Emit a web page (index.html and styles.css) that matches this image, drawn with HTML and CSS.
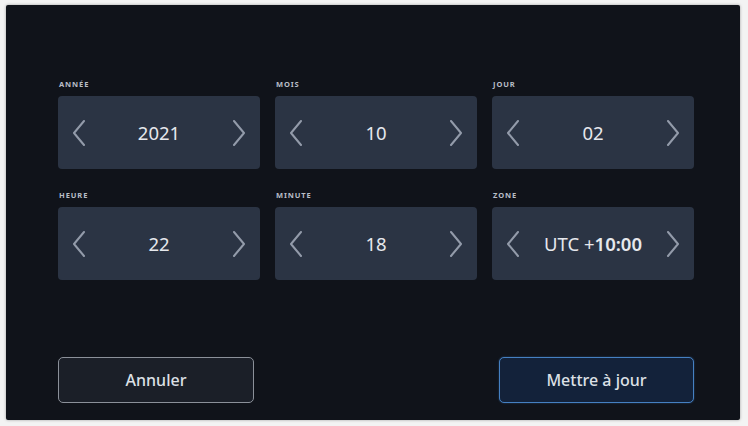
FILE: index.html
```html
<!DOCTYPE html>
<html lang="fr">
<head>
<meta charset="utf-8">
<title>Date et heure</title>
<link rel="stylesheet" href="styles.css">
</head>
<body>
<div class="panel">
  <div class="grid">
    <div class="field">
      <div class="label">ANNÉE</div>
      <div class="card">
        <svg class="chev" viewBox="0 0 14 26"><polyline points="12,1 2,13 12,25"/></svg>
        <span class="value">2021</span>
        <svg class="chev" viewBox="0 0 14 26"><polyline points="2,1 12,13 2,25"/></svg>
      </div>
    </div>
    <div class="field">
      <div class="label">MOIS</div>
      <div class="card">
        <svg class="chev" viewBox="0 0 14 26"><polyline points="12,1 2,13 12,25"/></svg>
        <span class="value">10</span>
        <svg class="chev" viewBox="0 0 14 26"><polyline points="2,1 12,13 2,25"/></svg>
      </div>
    </div>
    <div class="field">
      <div class="label">JOUR</div>
      <div class="card">
        <svg class="chev" viewBox="0 0 14 26"><polyline points="12,1 2,13 12,25"/></svg>
        <span class="value">02</span>
        <svg class="chev" viewBox="0 0 14 26"><polyline points="2,1 12,13 2,25"/></svg>
      </div>
    </div>
    <div class="field">
      <div class="label">HEURE</div>
      <div class="card">
        <svg class="chev" viewBox="0 0 14 26"><polyline points="12,1 2,13 12,25"/></svg>
        <span class="value">22</span>
        <svg class="chev" viewBox="0 0 14 26"><polyline points="2,1 12,13 2,25"/></svg>
      </div>
    </div>
    <div class="field">
      <div class="label">MINUTE</div>
      <div class="card">
        <svg class="chev" viewBox="0 0 14 26"><polyline points="12,1 2,13 12,25"/></svg>
        <span class="value">18</span>
        <svg class="chev" viewBox="0 0 14 26"><polyline points="2,1 12,13 2,25"/></svg>
      </div>
    </div>
    <div class="field">
      <div class="label">ZONE</div>
      <div class="card">
        <svg class="chev" viewBox="0 0 14 26"><polyline points="12,1 2,13 12,25"/></svg>
        <span class="value">UTC +<b class="strong">10:00</b></span>
        <svg class="chev" viewBox="0 0 14 26"><polyline points="2,1 12,13 2,25"/></svg>
      </div>
    </div>
  </div>
  <div class="footer">
    <button class="btn btn-cancel">Annuler</button>
    <button class="btn btn-ok">Mettre à jour</button>
  </div>
</div>
</body>
</html>
```
FILE: styles.css
```css
html, body {
  margin: 0;
  padding: 0;
}
body {
  width: 748px;
  height: 426px;
  background: #f3f3f3;
  font-family: "Noto Sans", "Open Sans", sans-serif;
  overflow: hidden;
}
.panel {
  box-sizing: border-box;
  margin: 5px 0 0 6px;
  width: 734px;
  height: 415px;
  background: #10131a;
  border-radius: 2px;
  box-shadow: 0 0 3px rgba(0,0,0,0.35);
  padding: 74px 46px 17px 52px;
  display: flex;
  flex-direction: column;
}
.grid {
  display: grid;
  grid-template-columns: repeat(3, 1fr);
  column-gap: 15px;
  row-gap: 21px;
}
.field {
  display: flex;
  flex-direction: column;
}
.label {
  font-size: 7.5px;
  line-height: 10px;
  font-weight: 700;
  letter-spacing: 0.9px;
  color: #b9bec7;
  margin-bottom: 7px;
  padding-left: 1px;
}
.card {
  height: 73px;
  background: #2b3444;
  border-radius: 4px;
  display: flex;
  align-items: center;
  justify-content: space-between;
  padding: 0 14px;
}
.chev {
  width: 14px;
  height: 26px;
  fill: none;
  stroke: #939baa;
  stroke-width: 2;
  stroke-linecap: round;
  stroke-linejoin: round;
}
.value {
  font-size: 18.5px;
  color: #e6e8ed;
  font-weight: 400;
}
.strong {
  font-weight: 600;
}
.footer {
  margin-top: auto;
  display: flex;
  justify-content: space-between;
}
.btn {
  box-sizing: border-box;
  height: 46px;
  border-radius: 5px;
  font-family: "Noto Sans", "Open Sans", sans-serif;
  font-size: 16px;
  font-weight: 500;
  color: #dde0e6;
  cursor: pointer;
}
.btn-cancel {
  width: 196px;
  background: #1b1f28;
  border: 1.5px solid #8b9099;
}
.btn-ok {
  width: 195px;
  background: #13223a;
  border: 1.5px solid #4580c2;
  box-shadow: 0 0 2px rgba(70,130,200,0.5);
}
```
